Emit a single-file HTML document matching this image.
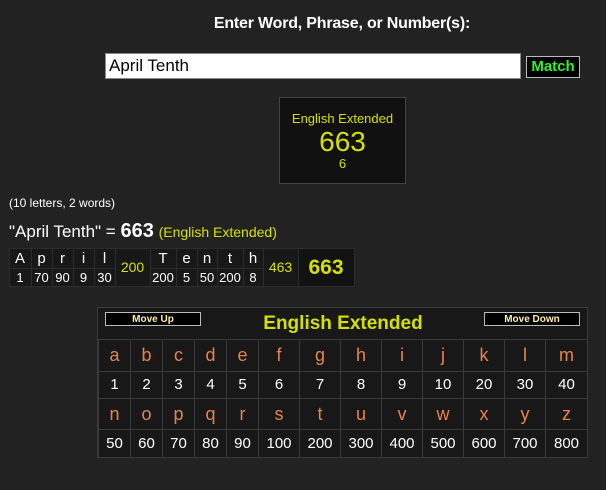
<!DOCTYPE html>
<html><head><style>
*{margin:0;padding:0;box-sizing:border-box}
body{width:606px;height:490px;background:#222;font-family:"Liberation Sans",Arial,sans-serif;position:relative;overflow:hidden;color:#fff}
.a{position:absolute}
.c{position:absolute;text-align:center}
.bt{position:absolute;border:1px solid #2c2c2c}
</style></head><body>
<div class="a" style="left:142px;top:15px;width:400px;text-align:center;font-weight:bold;font-size:16px;color:#fff;white-space:nowrap;letter-spacing:-0.2px">Enter Word, Phrase, or Number(s):</div>
<div class="a" style="left:105px;top:53px;width:416px;height:26px;background:#fff;border:1px solid #888;color:#000;font-size:17px;line-height:24px;padding-left:3px">April Tenth</div>
<div class="a" style="left:526px;top:56px;width:54px;height:22px;background:#000;border:1px solid #bbb;color:#33ee33;font-weight:bold;font-size:15px;line-height:20px;text-align:center">Match</div>
<div class="a" style="left:279px;top:97px;width:127px;height:87px;background:#111;border:1px solid #444;color:#d4e000;text-align:center">
<div style="margin-top:13px;font-size:13px;line-height:16px">English Extended</div>
<div style="font-size:28px;line-height:30px">663</div>
<div style="font-size:13px;line-height:14px">6</div></div>
<div class="a" style="left:9px;top:196px;font-size:12px;color:#fff">(10 letters, 2 words)</div>
<div class="a" style="left:9px;top:220px;font-size:17px;color:#fff;white-space:nowrap">"April Tenth" = <b style="font-size:20px">663</b> <span style="font-size:14px;color:#d4e000">(English Extended)</span></div>
<div class="a" style="left:9px;top:248px;width:345px;height:39px;background:#181818"></div>
<div class="a" style="left:298px;top:249px;width:56px;height:37px;background:#121212"></div>
<div id="bd"></div>
<div class="a" style="left:97px;top:307px;width:491px;height:151px;background:#181818;border:1px solid #3a3a3a"></div>
<div class="a" style="left:105px;top:312px;width:96px;height:14px;background:#000;border:1px solid #bbb;color:#ffeeaa;font-size:10px;font-weight:bold;text-align:center;line-height:13px">Move Up</div>
<div class="a" style="left:484px;top:312px;width:96px;height:14px;background:#000;border:1px solid #bbb;color:#ffeeaa;font-size:10px;font-weight:bold;text-align:center;line-height:13px">Move Down</div>
<div class="a" style="left:200px;top:313px;width:286px;text-align:center;color:#d4e000;font-weight:bold;font-size:19px">English Extended</div>
<div id="lt"></div>
<script>
var bx=[9,31,52,73,94,115,150,176,197,217,243,263,298,354];
var top1=['A','p','r','i','l',null,'T','e','n','t','h',null,null];
var bot=['1','70','90','9','30',null,'200','5','50','200','8',null,null];
var h='';
for(var i=0;i<13;i++){var x=bx[i],w=bx[i+1]-x;
if(top1[i]!==null){h+='<div class="bt" style="left:'+x+'px;top:248px;width:'+(w+1)+'px;height:21px"></div><div class="bt" style="left:'+x+'px;top:268px;width:'+(w+1)+'px;height:19px"></div>';
h+='<div class="c" style="left:'+x+'px;top:250px;width:'+w+'px;font-size:15px;color:#fff">'+top1[i]+'</div><div class="c" style="left:'+x+'px;top:270px;width:'+w+'px;font-size:13px;color:#fff">'+bot[i]+'</div>';}
else{var t=i==5?'200':(i==11?'463':'663');var st=i==12?'font-size:21px;font-weight:bold;top:256px':'font-size:14px;top:259px';
h+='<div class="bt" style="left:'+x+'px;top:248px;width:'+(w+1)+'px;height:39px"></div><div class="c" style="left:'+x+'px;width:'+w+'px;color:#d4e000;'+st+'">'+t+'</div>';}}
document.getElementById('bd').innerHTML=h;
var cx=[98,130,162,194,226,258,299,340,381,422,463,504,545,587];
var ry=[339,371,398,429,457];
var L='abcdefghijklm',L2='nopqrstuvwxyz';
var V1=[1,2,3,4,5,6,7,8,9,10,20,30,40],V2=[50,60,70,80,90,100,200,300,400,500,600,700,800];
var g='';
for(var r=0;r<4;r++)for(var i=0;i<13;i++){var x=cx[i],w=cx[i+1]-x,y=ry[r],hh=ry[r+1]-y;
var t=r==0?L[i]:r==1?V1[i]:r==2?L2[i]:V2[i];var col=r%2==0?'#e8834a':'#fff';var fs=r%2==0?18:15;
g+='<div class="a" style="left:'+x+'px;top:'+y+'px;width:'+(w+1)+'px;height:'+(hh+1)+'px;border:1px solid #3a3a3a;color:'+col+';font-size:'+fs+'px;text-align:center;line-height:'+(hh-1)+'px">'+t+'</div>';}
document.getElementById('lt').innerHTML=g;
</script>
</body></html>
